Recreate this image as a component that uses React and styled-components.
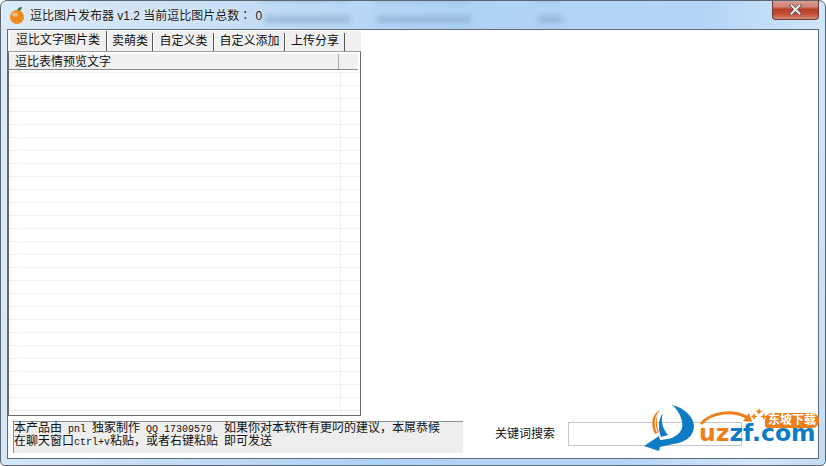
import styled, { createGlobalStyle } from "styled-components";

const GlobalStyle = createGlobalStyle`
    html, body {
        margin: 0;
        padding: 0;
        background: #ffffff;
        overflow: hidden;
    }
    body {
        font-family: "Liberation Sans", "Noto Sans CJK SC", sans-serif;
    }
`

const WindowFrame = styled.div`
    position: relative;
    width: 826px;
    height: 466px;
    box-sizing: border-box;
    display: flex;
    flex-direction: column;
    overflow: hidden;
    border: 1px solid #5b6670;
    border-radius: 7px 7px 5px 5px;
    background: linear-gradient(100deg, #dcebf8 0%, #c2dcf5 30%, #aed2f6 50%, #b4d5f7 78%, #d2e6fa 92%, #c3dcf2 100%);
`

const TitleBar = styled.div`
    position: relative;
    height: 28px;
    flex: none;
    display: flex;
    align-items: center;
    padding-left: 8px;
    gap: 5px;
`

const TitleText = styled.span`
    font-size: 12px;
    color: #1a1a1a;
    white-space: nowrap;
    position: relative;
    top: -1px;
    text-shadow: 0 0 6px rgba(255, 255, 255, 0.9);
`

const TitleColon = styled.span`
    font-family: "Noto Sans CJK JP", sans-serif;
    margin-right: 4px;
`

// the desktop showing through the aero glass, too blurred to read
const Smudge = styled.div`
    position: absolute;
    top: ${p => p.$top}px;
    left: ${p => p.$left}px;
    width: ${p => p.$width}px;
    height: ${p => p.$height}px;
    background: #8aa9d0;
    filter: blur(3px);
`

const CloseButton = styled.div`
    position: absolute;
    top: -1px;
    right: 6px;
    width: 47px;
    height: 20px;
    box-sizing: border-box;
    border: 1px solid #6b3a34;
    border-top: none;
    border-radius: 0 0 4px 4px;
    background: linear-gradient(#d9a196 0%, #cf8475 35%, #b93d26 50%, #c4553e 78%, #d58d7e 100%);
    display: flex;
    align-items: center;
    justify-content: center;
`

const ClientArea = styled.div`
    flex: 1;
    min-height: 0;
    margin: 0 6px 6px 6px;
    background: #ffffff;
    border: 1px solid #5f6b76;
    display: flex;
    flex-direction: column;
    box-sizing: border-box;
`

const LeftPanel = styled.div`
    width: 353px;
    height: 385px;
    flex: none;
    background: #f0f0f0;
    display: flex;
    flex-direction: column;
    margin-top: 1px;
`

const TabStrip = styled.div`
    height: 20px;
    flex: none;
    display: flex;
    align-items: flex-end;
    padding-left: 1px;
`

const Tab = styled.div`
    height: ${p => (p.$active ? 20 : 18)}px;
    box-sizing: border-box;
    width: ${p => p.$width}px;
    font-size: 12px;
    line-height: ${p => (p.$active ? 18 : 17)}px;
    text-align: center;
    color: #111111;
    white-space: nowrap;
    border-right: 1px solid #555555;
    border-left: 1px solid #ffffff;
    background: #f0f0f0;
`

const ListBox = styled.div`
    flex: 1;
    min-height: 0;
    width: 353px;
    box-sizing: border-box;
    border: 1px solid #6c6c6c;
    border-top-color: #a0a0a0;
    background: #ffffff;
    overflow: hidden;
    padding-top: 2px;
`

const ListHeader = styled.div`
    height: 16px;
    display: flex;
    box-sizing: border-box;
    background: #f0f0f0;
    border-bottom: 1px solid #8a8a8a;
    width: 349px;
`

const HeaderCell = styled.div`
    width: ${p => p.$width}px;
    box-sizing: border-box;
    font-size: 12px;
    line-height: 17px;
    padding-left: 6px;
    color: #111111;
    white-space: nowrap;
    overflow: hidden;
    border-right: ${p => (p.$divider ? "1px solid #a8a8a8" : "none")};
`

const ListRow = styled.div`
    height: ${p => (p.$first ? 3 : 13)}px;
    box-sizing: border-box;
    border-bottom: 1px solid #f0f0f0;
    display: flex;
`

const RowCell = styled.div`
    width: 331px;
    height: 100%;
    border-right: 1px solid #f0f0f0;
`

const BottomBar = styled.div`
    flex: 1;
    min-height: 0;
    display: flex;
    align-items: flex-start;
    padding: 5px 0 0 5px;
`

const Notice = styled.div`
    width: 450px;
    height: 32px;
    box-sizing: border-box;
    background: #eeeeee;
    border-top: 1px solid #8f8f8f;
    border-left: 1px solid #8f8f8f;
    font-family: "Noto Sans CJK SC", sans-serif;
    font-size: 12px;
    line-height: 13px;
    color: #111111;
    white-space: pre;
`

const NoticeBody = styled.div`
    margin-top: -2px;
`

const NoticeLatin = styled.span`
    font-family: "Liberation Mono", monospace;
    font-size: 10px;
    line-height: 0;
`

const SearchLabel = styled.label`
    margin: 5px 0 0 32px;
    font-size: 12px;
    line-height: 16px;
    color: #111111;
    white-space: nowrap;
`

const SearchInput = styled.input`
    margin: 1px 0 0 13px;
    width: 174px;
    height: 24px;
    box-sizing: border-box;
    border: 1px solid #c3c6d0;
    background: #ffffff;
    outline: none;
`

const Watermark = styled.div`
    position: absolute;
    left: 641px;
    top: 402px;
    width: 182px;
    height: 54px;
`

const BrandText = styled.span`
    position: absolute;
    left: 57px;
    top: 17px;
    font-family: "DejaVu Sans", sans-serif;
    font-weight: 700;
    font-size: 23.5px;
    line-height: 26px;
    white-space: nowrap;
    color: #0e7cc4;
`

const BrandOrange = styled.span`
    color: #ef7d1a;
`

const BrandBadge = styled.span`
    position: absolute;
    left: 123px;
    top: 10px;
    width: 54px;
    height: 15px;
    border-radius: 7px 7px 7px 3px;
    background: #ef7d1a;
    color: #ffffff;
    font-size: 12px;
    font-weight: 700;
    line-height: 15px;
    text-align: center;
    white-space: nowrap;
`

const OrangeIcon = () => (
    <svg width="16" height="20" viewBox="0 0 16 20">
        <path d="M7 7 C8 4 10 2 13 2 C12.5 5 10.500 6.800 7 7 Z" fill="#2f7a2c" />
        <circle cx="8" cy="12" r="7" fill="#ee8a23" />
        <ellipse cx="6" cy="9.500" rx="3" ry="2" fill="#f8c27c" />
    </svg>
)

const CloseGlyph = () => (
    <svg width="13" height="11" viewBox="0 0 13 11">
        <path d="M2.500 1.500 L10.500 9.500 M10.500 1.500 L2.500 9.500" stroke="#5a4a48" strokeWidth="3.600" strokeLinecap="square" />
        <path d="M2.500 1.500 L10.500 9.500 M10.500 1.500 L2.500 9.500" stroke="#ededed" strokeWidth="2" strokeLinecap="square" />
    </svg>
)

const LogoMark = () => (
    <svg width="182" height="54" viewBox="0 0 182 54" style={{ position: "absolute", left: 0, top: 0 }}>
        <path d="M30 2 C43 5 52 14 52 24 C51 35 41 40 31 41 L18 44 L17 48 L2 43 L17 33 L18 37 C25 36 30 36 33 33 C40 30 41 23 40 18 C38 11 35 6 30 2 Z" fill="#0e7cc4" />
        <path d="M18 7 C10 11 8 21 13 31 L17 29 C14 21 14 13 18 7 Z" fill="#ef7d1a" />
        <path d="M17 9 C13 14 12 21 15 29" fill="none" stroke="#ffffff" strokeWidth="1" />
        <path d="M21 10 C18 18 21 26 26 32 L19 34 C16 26 16 16 21 10 Z" fill="#0e7cc4" />
        <path d="M59 21 C70 8 92 7 106 15" fill="none" stroke="#ef7d1a" strokeWidth="3" />
        <path d="M110 19 L101 18 L107 10 Z" fill="#ef7d1a" />
        <path d="M117 5 l1 2.500 2.500 1 -2.500 1 -1 2.500 -1 -2.500 -2.500 -1 2.500 -1 Z M112 10 l1 2.500 2.500 1 -2.500 1 -1 2.500 -1 -2.500 -2.500 -1 2.500 -1 Z M122 10 l1 2.500 2.500 1 -2.500 1 -1 2.500 -1 -2.500 -2.500 -1 2.500 -1 Z" fill="#ef7d1a" />
    </svg>
)

const smudges = [
    { top: -4, left: 262, width: 86, height: 3 },
    { top: -4, left: 375, width: 94, height: 3 },
    { top: -4, left: 535, width: 24, height: 3 },
    { top: 16, left: 263, width: 86, height: 5 },
    { top: 16, left: 376, width: 94, height: 5 },
    { top: 16, left: 537, width: 24, height: 5 },
]

const tabs = [
    { label: "逗比文字图片类", width: 98, active: true },
    { label: "卖萌类", width: 46 },
    { label: "自定义类", width: 61 },
    { label: "自定义添加", width: 71 },
    { label: "上传分享", width: 60 },
]

const rows = Array.from({ length: 28 }, (_, i) => i)

const App = () => {
    return (
        <>
            <GlobalStyle />
            <WindowFrame>
                <TitleBar>
                    {smudges.map(s => (
                        <Smudge key={`${s.top}-${s.left}`} $top={s.top} $left={s.left} $width={s.width} $height={s.height} />
                    ))}
                    <OrangeIcon />
                    <TitleText>逗比图片发布器 v1.2 当前逗比图片总数<TitleColon>：</TitleColon>0</TitleText>
                    <CloseButton><CloseGlyph /></CloseButton>
                </TitleBar>
                <ClientArea>
                    <LeftPanel>
                        <TabStrip>
                            {tabs.map(tab => (
                                <Tab key={tab.label} $active={tab.active} $width={tab.width}>{tab.label}</Tab>
                            ))}
                        </TabStrip>
                        <ListBox>
                            <ListHeader>
                                <HeaderCell $width={330} $divider>逗比表情预览文字</HeaderCell>
                                <HeaderCell $width={19} />
                            </ListHeader>
                            {rows.map(row => (
                                <ListRow key={row} $first={row === 0}><RowCell /></ListRow>
                            ))}
                        </ListBox>
                    </LeftPanel>
                    <BottomBar>
                        <Notice>
                            <NoticeBody>
                                本产品由<NoticeLatin> pnl </NoticeLatin>独家制作<NoticeLatin> QQ 17309579  </NoticeLatin>如果你对本软件有更叼的建议，本屌恭候{"\n"}
                                在聊天窗口<NoticeLatin>ctrl+v</NoticeLatin>粘贴，或者右键粘贴<NoticeLatin> </NoticeLatin>即可发送
                            </NoticeBody>
                        </Notice>
                        <SearchLabel>关键词搜索</SearchLabel>
                        <SearchInput />
                    </BottomBar>
                </ClientArea>
                <Watermark>
                    <LogoMark />
                    <BrandText><BrandOrange>uz</BrandOrange>zf.com</BrandText>
                    <BrandBadge>东坡下载</BrandBadge>
                </Watermark>
            </WindowFrame>
        </>
    );
}

export default App;
